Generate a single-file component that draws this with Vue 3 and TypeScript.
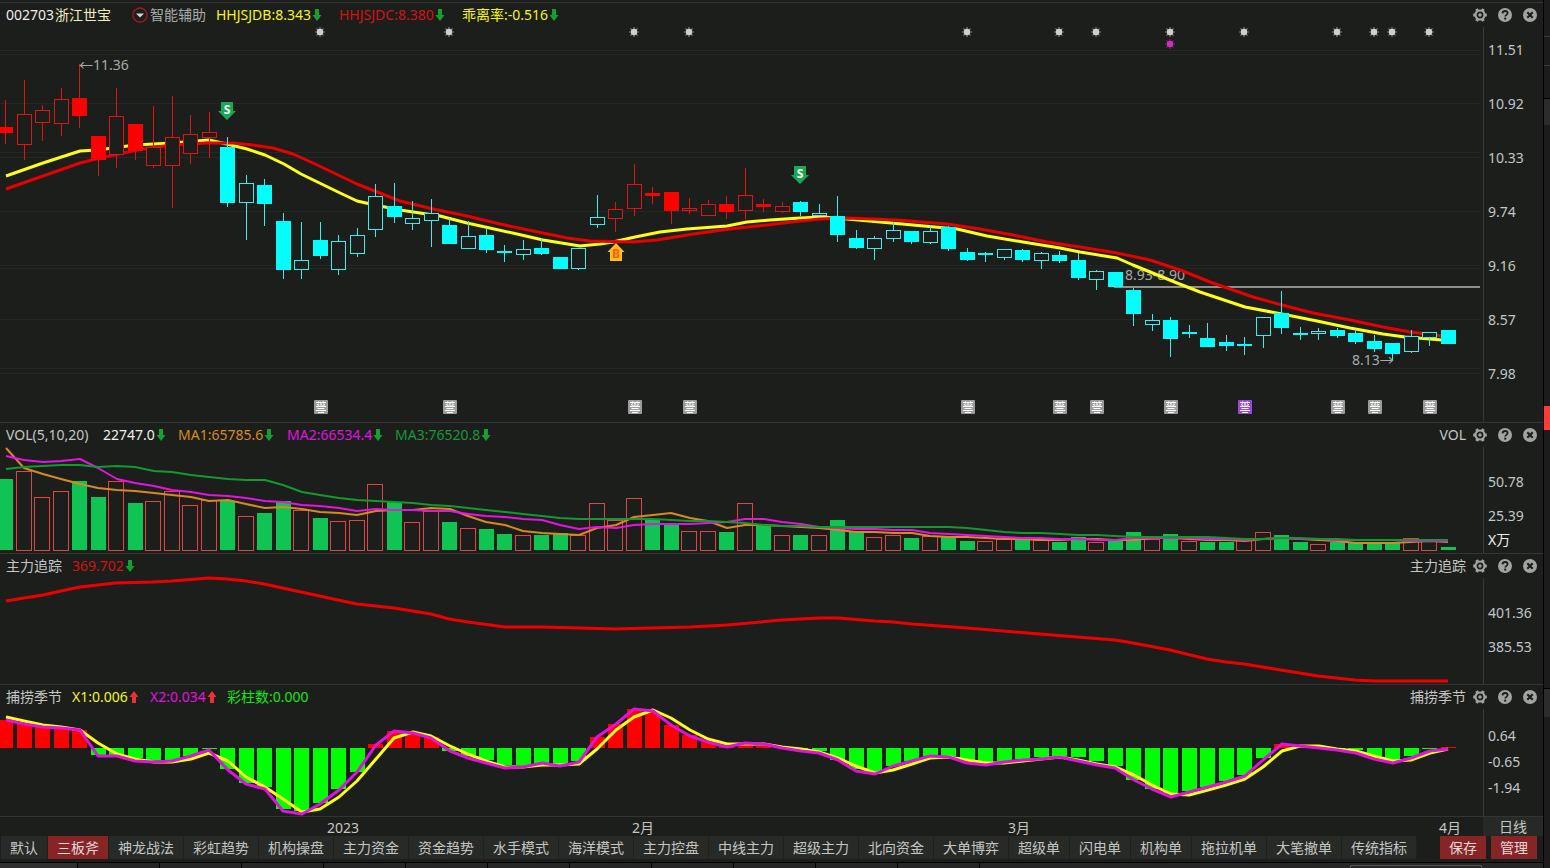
<script setup lang="ts">
type Kind = 'rh' | 'rs' | 'ch' | 'cs'
type Candle = [Kind, number, number, number, number]
interface LegendItem { text: string; color: string; arrow?: 'up' | 'down' }

const STEP = 18.498
const center = (i: number): number => 5.55 + STEP * i
const left = (i: number): number => Math.floor(center(i) - 7)
const wick = (i: number): number => Math.floor(center(i)) + 0.5
const byColumn = (ys: number[]): string => ys.map((y, i) => `${Math.round(center(i))},${y}`).join(' ')

/* kind, high, body top, body bottom, low */
const candles: Candle[] = [
  ['rs', 100, 127, 133, 144], ['rh', 80, 114, 145, 160], ['rh', 105, 110, 123, 141], ['rh', 88, 99, 124, 136],
  ['rs', 64, 98, 116, 128], ['rs', 136, 136, 160, 176], ['rh', 88, 116, 155, 168], ['rs', 124, 124, 151, 160],
  ['rh', 106, 147, 166, 168], ['rh', 96, 137, 166, 208], ['rh', 115, 134, 154, 164], ['rh', 112, 132, 138, 158],
  ['cs', 137, 147, 203, 207], ['ch', 175, 183, 203, 240], ['cs', 179, 185, 204, 226], ['cs', 213, 221, 270, 279],
  ['ch', 222, 260, 270, 279], ['cs', 222, 240, 256, 259], ['ch', 235, 241, 270, 275], ['ch', 228, 235, 254, 257],
  ['ch', 184, 196, 230, 237], ['cs', 183, 206, 217, 223], ['ch', 201, 218, 224, 230], ['ch', 199, 213, 221, 247],
  ['cs', 218, 225, 244, 244], ['ch', 221, 236, 249, 249], ['cs', 228, 235, 250, 253], ['cs', 245, 251, 253, 262],
  ['ch', 240, 249, 255, 260], ['cs', 238, 248, 254, 255], ['cs', 257, 257, 269, 269], ['ch', 248, 248, 269, 270],
  ['ch', 195, 217, 225, 228], ['rh', 202, 209, 219, 232], ['rh', 164, 184, 209, 216], ['rs', 187, 193, 196, 204],
  ['rs', 192, 192, 211, 224], ['rh', 198, 208, 211, 214], ['rh', 200, 204, 216, 216], ['rs', 196, 204, 212, 219],
  ['rh', 168, 195, 211, 219], ['rs', 199, 204, 207, 212], ['rh', 202, 206, 212, 213], ['cs', 201, 202, 212, 216],
  ['ch', 204, 213, 216, 216], ['cs', 196, 216, 235, 242], ['cs', 230, 238, 248, 249], ['ch', 236, 238, 249, 260],
  ['ch', 222, 230, 239, 242], ['cs', 231, 231, 242, 244], ['ch', 225, 231, 243, 244], ['cs', 226, 227, 249, 251],
  ['cs', 248, 252, 260, 261], ['cs', 252, 253, 255, 262], ['ch', 249, 249, 258, 260], ['cs', 249, 250, 260, 262],
  ['ch', 252, 253, 261, 269], ['cs', 251, 255, 261, 263], ['cs', 253, 260, 278, 280], ['ch', 270, 271, 280, 290],
  ['cs', 272, 272, 287, 287], ['cs', 288, 290, 314, 326], ['ch', 314, 320, 325, 331], ['cs', 317, 320, 339, 357],
  ['cs', 325, 332, 334, 338], ['cs', 323, 338, 347, 347], ['cs', 335, 342, 346, 351], ['cs', 337, 344, 346, 355],
  ['ch', 317, 317, 336, 348], ['cs', 291, 313, 328, 334], ['cs', 327, 333, 335, 340], ['ch', 328, 331, 334, 340],
  ['cs', 328, 330, 336, 338], ['cs', 329, 333, 342, 344], ['cs', 335, 341, 349, 352], ['cs', 343, 343, 354, 360],
  ['ch', 330, 336, 352, 353], ['ch', 332, 332, 338, 346], ['cs', 330, 330, 344, 344],
]
const tone = (k: Kind): string => (k[0] === 'r' ? 'red' : 'cyan')

const fastLine = '6,176 43,163 80,151 98,150 135,145 172,143 209,140 227,144 247,149 265,155 284,164 301,174 338,192 357,201 375,205 400,210 440,216 467,223 517,234 543,240 580,246 600,244 613,242 635,237 660,232 687,229 727,226 747,222 770,220 800,218 823,217 847,219 880,222 913,225 957,229 987,236 1023,242 1060,248 1080,252 1117,258 1133,265 1177,283 1200,292 1245,307 1282,314 1317,321 1350,328 1383,334 1405,337 1442,340'
const slowLine = '6,189 43,176 80,163 100,158 128,152 143,149 172,145 207,143 233,143 253,145 273,148 293,154 313,163 357,184 400,201 433,209 467,216 500,224 533,231 567,238 590,241 633,242 657,240 693,234 730,229 767,225 800,221 820,219 847,218 897,220 947,224 980,229 1013,235 1047,242 1080,247 1117,253 1150,260 1183,271 1210,282 1253,297 1282,305 1313,313 1350,320 1383,327 1410,332 1443,336'
const trendLine = '6,601 24,598 43,595 61,591 80,587 98,585 115,583 153,582 172,581 209,578 227,579 246,581 264,584 301,592 338,600 357,604 394,608 431,614 449,619 468,622 505,627 542,627 580,628 615,629 652,628 690,627 727,625 782,620 800,619 820,618 838,618 875,621 893,622 912,624 967,628 1040,634 1077,637 1115,640 1133,643 1170,650 1207,659 1226,662 1244,664 1281,670 1318,676 1355,680 1374,681 1448,681'

const gridLines = [50, 54, 103, 152, 157, 211, 265, 268, 319, 368, 373]
const stars = [17, 24, 34, 37, 52, 57, 59, 63, 67, 72, 74, 75, 77]
const badges = [17, 24, 34, 37, 52, 57, 59, 63, 67, 72, 74, 77]

const volumeTops = [
  479, 471, 497, 491, 481, 497, 481, 503, 501, 491, 505, 500, 501, 516, 513, 501, 510, 518, 521, 520,
  484, 502, 522, 511, 522, 528, 529, 534, 535, 535, 533, 535, 503, 520, 498, 519, 525, 531, 531, 532,
  503, 526, 535, 535, 535, 520, 532, 537, 535, 538, 536, 536, 541, 541, 539, 540, 540, 542, 537, 542,
  541, 532, 539, 534, 541, 542, 542, 540, 532, 535, 542, 544, 542, 542, 543, 543, 538, 540, 547,
]
const fallingDays = new Set([
  0, 4, 5, 7, 12, 14, 15, 17, 21, 24, 26, 27, 29, 30, 35, 36, 39, 41, 43, 45, 46, 49, 51, 52, 55, 57, 58,
  60, 61, 63, 65, 66, 69, 70, 72, 73, 74, 75, 78,
])
const ma1 = [
  448, 468, 474, 479, 484, 488, 490, 491, 493, 495, 497, 501, 500, 504, 508, 507, 509, 512, 513, 515,
  511, 510, 510, 508, 509, 516, 522, 525, 531, 533, 534, 535, 528, 525, 517, 515, 513, 518, 521, 528,
  525, 525, 526, 527, 528, 530, 532, 532, 533, 533, 536, 537, 537, 538, 539, 539, 540, 540, 539, 539,
  540, 540, 538, 538, 539, 540, 540, 541, 539, 538, 539, 540, 541, 543, 543, 543, 542, 541, 542,
]
const ma2 = [
  456, 460, 462, 461, 459, 468, 479, 483, 486, 490, 492, 495, 496, 498, 501, 502, 505, 506, 508, 511,
  509, 510, 510, 511, 511, 514, 516, 517, 519, 520, 525, 529, 527, 528, 525, 524, 524, 524, 523, 522,
  519, 519, 522, 524, 527, 528, 529, 529, 530, 530, 533, 534, 535, 536, 537, 538, 538, 539, 539, 540,
  540, 538, 538, 538, 538, 539, 539, 540, 539, 538, 539, 539, 540, 540, 540, 540, 541, 541, 541,
]
const ma3 = [
  469, 467, 466, 465, 465, 467, 466, 467, 471, 472, 475, 477, 479, 480, 480, 485, 492, 495, 498, 500,
  501, 502, 503, 505, 506, 508, 510, 512, 514, 516, 518, 519, 519, 519, 519, 519, 520, 521, 521, 522,
  523, 525, 526, 526, 527, 527, 527, 527, 527, 527, 527, 527, 528, 530, 532, 533, 533, 534, 535, 535,
  536, 537, 537, 537, 537, 537, 538, 539, 539, 538, 538, 539, 539, 540, 540, 540, 540, 540, 540,
]

const ZERO = 748
const seasonTips = [
  720, 723, 727, 728, 730, 755, 755, 758, 760, 760, 756, 749, 769, 783, 787, 809, 811, 803, 789, 772,
  744, 731, 733, 737, 751, 756, 760, 765, 765, 763, 764, 761, 737, 724, 709, 711, 725, 735, 741, 746,
  745, 746, 747, 749, 751, 760, 769, 771, 766, 761, 756, 756, 760, 763, 761, 759, 757, 756, 757, 761,
  766, 780, 789, 793, 791, 787, 781, 775, 758, 744, 747, 747, 749, 750, 756, 761, 756, 749, 747,
]
const x1 = [
  717, 721, 725, 727, 730, 743, 754, 759, 762, 762, 759, 753, 761, 777, 787, 799, 812, 809, 797, 781,
  759, 738, 732, 736, 746, 754, 761, 767, 767, 765, 765, 764, 749, 730, 717, 710, 718, 730, 739, 744,
  744, 744, 747, 749, 752, 758, 766, 773, 770, 764, 758, 757, 760, 763, 763, 761, 759, 757, 760, 764,
  767, 775, 785, 794, 795, 790, 785, 779, 767, 751, 746, 746, 749, 751, 756, 761, 760, 753, 749,
]
const x2 = [
  720, 724, 727, 728, 730, 756, 756, 761, 762, 761, 756, 750, 770, 784, 789, 811, 814, 804, 790, 772,
  745, 731, 733, 738, 751, 758, 763, 768, 767, 763, 766, 762, 737, 724, 709, 711, 725, 736, 742, 747,
  743, 744, 748, 751, 753, 760, 771, 774, 766, 761, 756, 757, 763, 765, 762, 760, 759, 757, 761, 765,
  768, 780, 789, 797, 792, 787, 782, 776, 760, 744, 746, 748, 750, 753, 759, 763, 758, 751, 749,
]

interface Panel { id: string; title: string; legend: LegendItem[]; axis: string[]; view: string }
const panels: Panel[] = [
  {
    id: 'price', title: '', view: '0 27 1483 395',
    legend: [
      { text: '002703', color: 'pale' }, { text: '浙江世宝', color: 'cream' }, { text: '智能辅助', color: 'grey' },
      { text: 'HHJSJDB:8.343', color: 'yellow', arrow: 'down' }, { text: 'HHJSJDC:8.380', color: 'red', arrow: 'down' },
      { text: '乖离率:-0.516', color: 'yellow', arrow: 'down' },
    ],
    axis: ['11.51', '10.92', '10.33', '9.74', '9.16', '8.57', '7.98'],
  },
  {
    id: 'volume', title: 'VOL', view: '0 447 1483 106',
    legend: [
      { text: 'VOL(5,10,20)', color: 'silver' }, { text: '22747.0', color: 'pale', arrow: 'down' },
      { text: 'MA1:65785.6', color: 'orange', arrow: 'down' }, { text: 'MA2:66534.4', color: 'magenta', arrow: 'down' },
      { text: 'MA3:76520.8', color: 'green', arrow: 'down' },
    ],
    axis: ['50.78', '25.39', 'X万'],
  },
  {
    id: 'trend', title: '主力追踪', view: '0 578 1483 106',
    legend: [{ text: '主力追踪', color: 'silver' }, { text: '369.702', color: 'red', arrow: 'down' }],
    axis: ['401.36', '385.53'],
  },
  {
    id: 'season', title: '捕捞季节', view: '0 709 1483 107',
    legend: [
      { text: '捕捞季节', color: 'silver' }, { text: 'X1:0.006', color: 'yellow', arrow: 'up' },
      { text: 'X2:0.034', color: 'magenta', arrow: 'up' }, { text: '彩柱数:0.000', color: 'lime' },
    ],
    axis: ['0.64', '-0.65', '-1.94'],
  },
]

const tabs = [
  '默认', '三板斧', '神龙战法', '彩虹趋势', '机构操盘', '主力资金', '资金趋势', '水手模式', '海洋模式', '主力控盘',
  '中线主力', '超级主力', '北向资金', '大单博弈', '超级单', '闪电单', '机构单', '拖拉机单', '大笔撤单', '传统指标',
]
const months = [{ x: 343, t: '2023' }, { x: 643, t: '2月' }, { x: 1019, t: '3月' }, { x: 1450, t: '4月' }]
</script>

<template>
  <div class="app">
    <main class="main">
      <section v-for="p in panels" :key="p.id" class="panel" :class="p.id">
        <header class="head">
          <div class="legend">
            <span v-for="(l, n) in p.legend" :key="n" class="item" :class="l.color">
              <button v-if="l.color === 'grey'" class="icon drop" type="button" aria-label="展开">
                <svg width="16" height="16" viewBox="0 0 16 16">
                  <circle cx="8" cy="8" r="7" fill="none" stroke="#a01820" stroke-width="1.4" />
                  <path d="M4 6.5h8L8 10.5z" fill="#d8d8d8" />
                </svg>
              </button>
              <span>{{ l.text }}</span>
              <svg v-if="l.arrow" class="arrow" width="8" height="12" viewBox="0 0 8 12">
                <path v-if="l.arrow === 'down'" d="M2 0h4v6h2.500L4 12-.5 6H2z" fill="#14a030" />
                <path v-else d="M2 12h4V6h2.500L4 0-.5 6H2z" fill="#f03030" />
              </svg>
            </span>
          </div>
          <div class="tools">
            <span v-if="p.title" class="title">{{ p.title }}</span>
            <button class="icon" type="button" aria-label="设置">
              <svg width="14" height="14" viewBox="0 0 14 14">
                <circle cx="7" cy="7" r="4.500" fill="none" stroke="#a2a4a2" stroke-width="2.200" />
                <path d="M0.200 7H2M12 7h1.800M3.600 1.100l.9 1.600M10.400 1.100l-.9 1.600M3.600 12.900l.9-1.600M10.400 12.900l-.9-1.600" stroke="#a2a4a2" stroke-width="3" />
                <circle cx="7" cy="7" r="1.700" fill="#a2a4a2" />
              </svg>
            </button>
            <button class="icon" type="button" aria-label="帮助">
              <svg width="14" height="14" viewBox="0 0 14 14">
                <circle cx="7" cy="7" r="7" fill="#a2a4a2" />
                <path d="M4.500 5.400C4.600 3.700 5.700 3 7.100 3c1.500 0 2.500.8 2.500 2.100 0 1.700-2.400 1.800-2.400 3.500" fill="none" stroke="#1c1e1b" stroke-width="1.800" />
                <rect x="6.200" y="9.600" width="2" height="2" fill="#1c1e1b" />
              </svg>
            </button>
            <button class="icon" type="button" aria-label="关闭">
              <svg width="14" height="14" viewBox="0 0 14 14">
                <circle cx="7" cy="7" r="7" fill="#a2a4a2" />
                <path d="M4.300 4.300l5.400 5.400M9.700 4.300l-5.400 5.400" stroke="#1c1e1b" stroke-width="2.200" />
              </svg>
            </button>
          </div>
        </header>

        <div class="body">
          <div class="plot">
            <svg class="chart" :viewBox="p.view">
              <template v-if="p.id === 'price'">
                <rect v-for="g in gridLines" :key="g" x="0" :y="g" width="1480" height="1" fill="#252725" />
                <text class="note" x="1125" y="280">8.93-8.90</text>
                <rect x="1114" y="286" width="366" height="2" fill="#8c908d" />
                <polyline :points="fastLine" class="line thick" stroke="#ffff18" />
                <polyline :points="slowLine" class="line thick" stroke="#e60000" />
                <g v-for="(c, i) in candles" :key="i" :class="tone(c[0])" class="candle">
                  <line :x1="wick(i)" :x2="wick(i)" :y1="c[1]" :y2="c[4]" />
                  <rect v-if="c[0][1] === 's'" class="solid" :x="left(i)" :y="c[2]" width="15" :height="c[3] - c[2]" />
                  <rect v-else class="hollow" :x="left(i) + 0.5" :y="c[2] + 0.5" width="14" :height="c[3] - c[2] - 1" />
                </g>
                <text class="note" x="79" y="70">←11.36</text>
                <text class="note" x="1352" y="365">8.13→</text>
                <g v-for="s in stars" :key="'s' + s" :transform="`translate(${Math.floor(center(s))} 32)`">
                  <path d="M-5 0H5M0-5V5M-3.500-3.500L3.500 3.500M3.500-3.500L-3.500 3.500" stroke="#7c7e7c" stroke-width="1.200" />
                  <circle r="3.200" fill="#d0d0d0" />
                </g>
                <g transform="translate(1170 44)">
                  <path d="M-5 0H5M0-5V5M-3.500-3.500L3.500 3.500M3.500-3.500L-3.500 3.500" stroke="#80207a" stroke-width="1.200" />
                  <circle r="3.200" fill="#d030b4" />
                </g>
                <g v-for="m in [{ x: 227, y: 102 }, { x: 800, y: 166 }]" :key="m.x" :transform="`translate(${m.x} ${m.y})`">
                  <path d="M-6 0H6V9H9L0 18L-9 9H-6z" fill="#17a955" />
                  <text class="mark" x="0" y="12" fill="#fff">S</text>
                </g>
                <g transform="translate(616 243)">
                  <path d="M0 0L8.500 9H6V18H-6V9H-8.500z" fill="#ffc018" />
                  <text class="mark" x="0" y="15" fill="#ff5a10">B</text>
                </g>
                <g v-for="b in badges" :key="'b' + b" :transform="`translate(${Math.floor(center(b)) - 6} 400)`">
                  <rect width="14" height="14" rx="1" :fill="b === 67 ? '#9a48e0' : '#9c9c9c'" />
                  <path d="M2 2.500H12M3 4.500L5.500 5.500M11 4.500L8.500 5.500M2 6.500H12M3.500 8.500H10.500M2 10.500H12M4 12.500H10M4.500 1.500V3.500M9.500 1.500V3.500M7 3V7" fill="none" stroke="#fff" stroke-width="1.100" />
                </g>
              </template>

              <template v-else-if="p.id === 'volume'">
                <template v-for="(t, i) in volumeTops" :key="i">
                  <rect v-if="fallingDays.has(i)" class="crisp" :x="left(i)" :y="t" width="15" :height="550 - t" fill="#0fc453" />
                  <rect v-else class="crisp" :x="left(i) - 0.5" :y="t + 0.5" width="15" :height="550 - t" fill="none" stroke="#e04444" />
                </template>
                <polyline :points="byColumn(ma1)" class="line" stroke="#d68a20" />
                <polyline :points="byColumn(ma2)" class="line" stroke="#e612e6" />
                <polyline :points="byColumn(ma3)" class="line" stroke="#129a30" />
              </template>

              <polyline v-else-if="p.id === 'trend'" :points="trendLine" class="line thick" stroke="#ee0000" />

              <template v-else>
                <rect
                  v-for="(t, i) in seasonTips" :key="i" class="crisp" :x="left(i)" :y="Math.min(t, ZERO)" width="15"
                  :height="Math.abs(t - ZERO)" :fill="t < ZERO ? '#ff0000' : '#00ff00'"
                />
                <polyline :points="byColumn(x1)" class="line thick" stroke="#ffff18" />
                <polyline :points="byColumn(x2)" class="line thick" stroke="#e012e0" />
              </template>
            </svg>
          </div>
          <div class="axis">
            <span v-for="a in p.axis" :key="a" :class="{ unit: a === 'X万' }">{{ a }}</span>
          </div>
        </div>
      </section>

      <div class="time">
        <div class="plot">
          <svg class="chart" viewBox="0 817 1483 19">
            <text v-for="m in months" :key="m.x" class="month" :x="m.x" y="833">{{ m.t }}</text>
          </svg>
        </div>
        <button class="period" type="button">日线</button>
      </div>

      <nav class="tabs">
        <button v-for="t in tabs" :key="t" type="button" class="tab" :class="{ on: t === '三板斧' }">{{ t }}</button>
        <span class="actions">
          <button type="button" class="act">保存</button>
          <button type="button" class="act">管理</button>
        </span>
      </nav>

      <div class="foot">
        <i v-for="n in 12" :key="n" class="cell"></i>
        <i class="scroll"></i>
      </div>
    </main>
    <aside class="side">
      <i class="s1"></i><i class="s2"></i><i class="s3"></i><i class="s4"></i><i class="hot"></i><i class="s5"></i><i class="s6"></i>
    </aside>
  </div>
</template>

<style>
body { margin: 0; background: #1c1e1b; }
</style>

<style scoped>
.app {
  display: grid;
  grid-template-columns: minmax(0, 1fr) 7px;
  min-height: 100vh;
  overflow: hidden;
  background: #1c1e1b;
  color: #c4c6c4;
  font: 14px/20px "Noto Sans", "Noto Sans CJK SC", sans-serif;
}
button {
  margin: 0;
  padding: 0;
  border: 0;
  background: none;
  color: inherit;
  font: inherit;
  cursor: pointer;
}
.main { display: flex; flex-direction: column; padding-top: 2px; }
.panel { border-top: 1px solid #333533; }
.head { display: flex; justify-content: space-between; align-items: center; height: 24px; padding: 0 6px; }
.legend { display: grid; white-space: nowrap; }
.price .legend { grid-template-columns: 49px 77px 84px 123px 123px auto; }
.volume .legend { grid-template-columns: 97px 75px 109px 108px auto; }
.trend .legend { grid-template-columns: 66px auto; }
.season .legend { grid-template-columns: 66px 78px 77px auto; }
.item { display: flex; align-items: center; gap: 2px; }
.arrow { overflow: visible; }
.tools { display: flex; align-items: center; gap: 11px; }
.title { margin-right: -4px; }
.icon { display: block; height: 14px; }
.icon svg { display: block; }
.drop { height: 16px; }
.pale { color: #eeeeee; }
.cream { color: #f2eec2; }
.grey { color: #a8aaa8; }
.silver { color: #c4c6c4; }
.yellow { color: #f4f41c; }
.red { color: #d81010; }
.orange { color: #d68a20; }
.magenta { color: #e012e0; }
.green { color: #129a38; }
.lime { color: #10e810; }

.body { display: flex; }
.plot { flex: 1; min-width: 0; }
.chart { display: block; width: 100%; height: auto; overflow: visible; }
.axis {
  box-sizing: border-box;
  flex: none;
  width: 60px;
  display: flex;
  flex-direction: column;
  padding-left: 4px;
  border-left: 1px solid #383a38;
}
.price .axis { padding-top: 13px; gap: 34px; }
.volume .axis, .trend .axis { padding-top: 25px; gap: 14px; }
.season .axis { padding-top: 17px; gap: 6px; }
.unit { margin-top: -10px; color: #eeeeee; }

.line { fill: none; stroke-width: 2; stroke-linejoin: round; }
.thick { stroke-width: 3; }
.crisp, .candle line, .candle rect { shape-rendering: crispEdges; }
.candle.red line { stroke: #dc1414; }
.candle.cyan line { stroke: #3cecec; }
.red .solid { fill: #ff0000; }
.cyan .solid { fill: #00ffff; }
.hollow { fill: #1c1e1b; stroke-width: 1; }
.red .hollow { stroke: #e01414; }
.cyan .hollow { stroke: #3cecec; }
.note { fill: #a8aaa8; font-size: 14px; }
.mark { font-size: 12px; font-weight: 700; text-anchor: middle; }
.month { fill: #c4c6c4; font-size: 14px; text-anchor: middle; }

.time { display: flex; border-top: 1px solid #333533; }
.period { flex: none; width: 60px; height: 19px; line-height: 19px; background: #272927; }
.tabs { display: flex; height: 23px; padding-left: 1px; }
.tab { padding: 0 9px; border-right: 1px solid #1f211f; background: #282a28; line-height: 23px; white-space: nowrap; }
.on, .act { background: #872426; color: #e4dada; }
.actions { display: flex; gap: 5px; margin-left: auto; padding-right: 6px; }
.act { width: 46px; line-height: 23px; }
.foot { display: flex; height: 5px; margin-top: 3px; border-top: 1px solid #000; background: #262626; overflow: hidden; }
.cell { flex: none; width: 81px; border-right: 1px solid #000; }
.cell:first-child { width: 77px; background: #303030; }
.scroll { width: 130px; height: 2px; margin: 2px 61px 0 auto; border: 1px solid #555; border-bottom: 0; }

.side { display: flex; flex-direction: column; border-left: 1px solid #000; background: #1c1c1c; }
.side i { border-bottom: 1px solid #3a3a3a; }
.s1 { height: 36px; }
.s2 { height: 28px; }
.side .s3 { height: 32px; border-color: #000; }
.side .s4 { height: 307px; border: 0; background: linear-gradient(#2c2c2c 26px, #1c1c1c 26px); }
.side .hot { height: 24px; border: 0; background: #ff3b3b; }
.side .s5 { height: 258px; border-color: #000; }
.side .s6 { height: 28px; border: 0; background: #2c2c2c; }
</style>
